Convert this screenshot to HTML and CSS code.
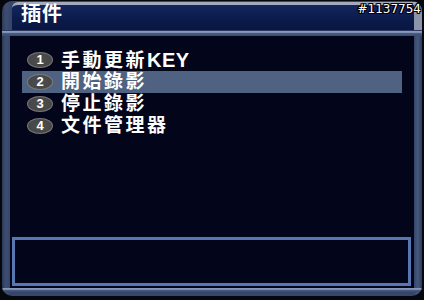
FILE: index.html
```html
<!DOCTYPE html>
<html lang="zh-Hant">
<head>
<meta charset="utf-8">
<title>插件</title>
<link rel="stylesheet" href="styles.css">
</head>
<body>
<div class="frame">
  <div class="header">
    <div class="title">插件</div>
  </div>
  <div class="sep"></div>
  <div class="panel">
    <ul class="menu">
      <li class="item"><span class="badge">1</span><span class="label">手動更新<span class="latin">KEY</span></span></li>
      <li class="item active"><span class="badge">2</span><span class="label">開始錄影</span></li>
      <li class="item"><span class="badge">3</span><span class="label">停止錄影</span></li>
      <li class="item"><span class="badge">4</span><span class="label">文件管理器</span></li>
    </ul>
    <div class="message"></div>
  </div>
  <div class="foot"></div>
  <div class="tag">#1137754</div>
</div>
</body>
</html>
```

FILE: styles.css
```css
html, body {
  margin: 0;
  padding: 0;
  background: #05070d;
}

.frame {
  position: relative;
  box-sizing: border-box;
  width: 420px;
  height: 295px;
  margin: 1px 2px 4px 2px;
  padding: 1px 0 4px 0;
  border-radius: 10px;
  overflow: hidden;
  background: linear-gradient(90deg, #2c3a58 0, #3e4e72 4px, #36466a 8px, #36466a 412px, #46587e 416px, #2c3a58 420px);
  display: flex;
  flex-direction: column;
  font-family: "Liberation Sans", "Noto Sans CJK TC", sans-serif;
}

.header {
  height: 25px;
  margin-left: 10px;
  border-top: 3px solid #a3aabb;
  border-right: 8px solid #8c94aa;
  border-top-left-radius: 6px;
  background: linear-gradient(#13265e, #0b1a4a 60%, #0a1642);
  padding-left: 9px;
}

.title {
  margin-top: -2px;
  font-size: 20px;
  line-height: 22px;
  letter-spacing: 1px;
  font-weight: 700;
  color: #ffffff;
}

.sep {
  height: 6px;
  background: linear-gradient(#2a3860 0, #2a3860 1px, #8f9ec0 1px, #7a8bb0 3px, #4c5e86 3px, #3a4a70 6px);
}

.panel {
  flex: 1;
  margin: 0 8px;
  background: #03061a;
  display: flex;
  flex-direction: column;
}

.menu {
  list-style: none;
  margin: 0;
  padding: 13px 12px 0 12px;
}

.item {
  height: 22px;
  display: flex;
  align-items: center;
  gap: 8px;
  padding-left: 5px;
}

.item.active {
  background: #4f6282;
}

.badge {
  box-sizing: border-box;
  width: 26px;
  height: 16px;
  border-radius: 50%;
  border: 1px solid #7a7a7a;
  background: radial-gradient(ellipse at 50% 50%, #4e4e4e 0, #474747 65%, #5e5e5e 100%);
  color: #ffffff;
  font-size: 13px;
  line-height: 14px;
  text-align: center;
  font-weight: 700;
  font-family: "Liberation Sans", sans-serif;
}

.label {
  font-size: 19px;
  line-height: 22px;
  letter-spacing: 2.5px;
  font-weight: 700;
  color: #ffffff;
  white-space: nowrap;
}

.latin {
  font-size: 20px;
  letter-spacing: 0.5px;
}

.message {
  margin: auto 3px 2px 2px;
  height: 43px;
  border: 3px solid #5877b0;
  background: #03061a;
}

.foot {
  height: 4px;
  background: linear-gradient(#8e9cbc 0, #7686aa 2px, #4a5a80 2px, #3a4a6e 4px);
}

.tag {
  position: absolute;
  top: 1px;
  right: 1px;
  font-family: "DejaVu Sans", sans-serif;
  font-size: 12px;
  line-height: 14px;
  color: #ffffff;
  text-shadow: 1px 0 0 #000, -1px 0 0 #000, 0 1px 0 #000, 0 -1px 0 #000, 1px 1px 0 #000, -1px -1px 0 #000, 1px -1px 0 #000, -1px 1px 0 #000;
}
```
